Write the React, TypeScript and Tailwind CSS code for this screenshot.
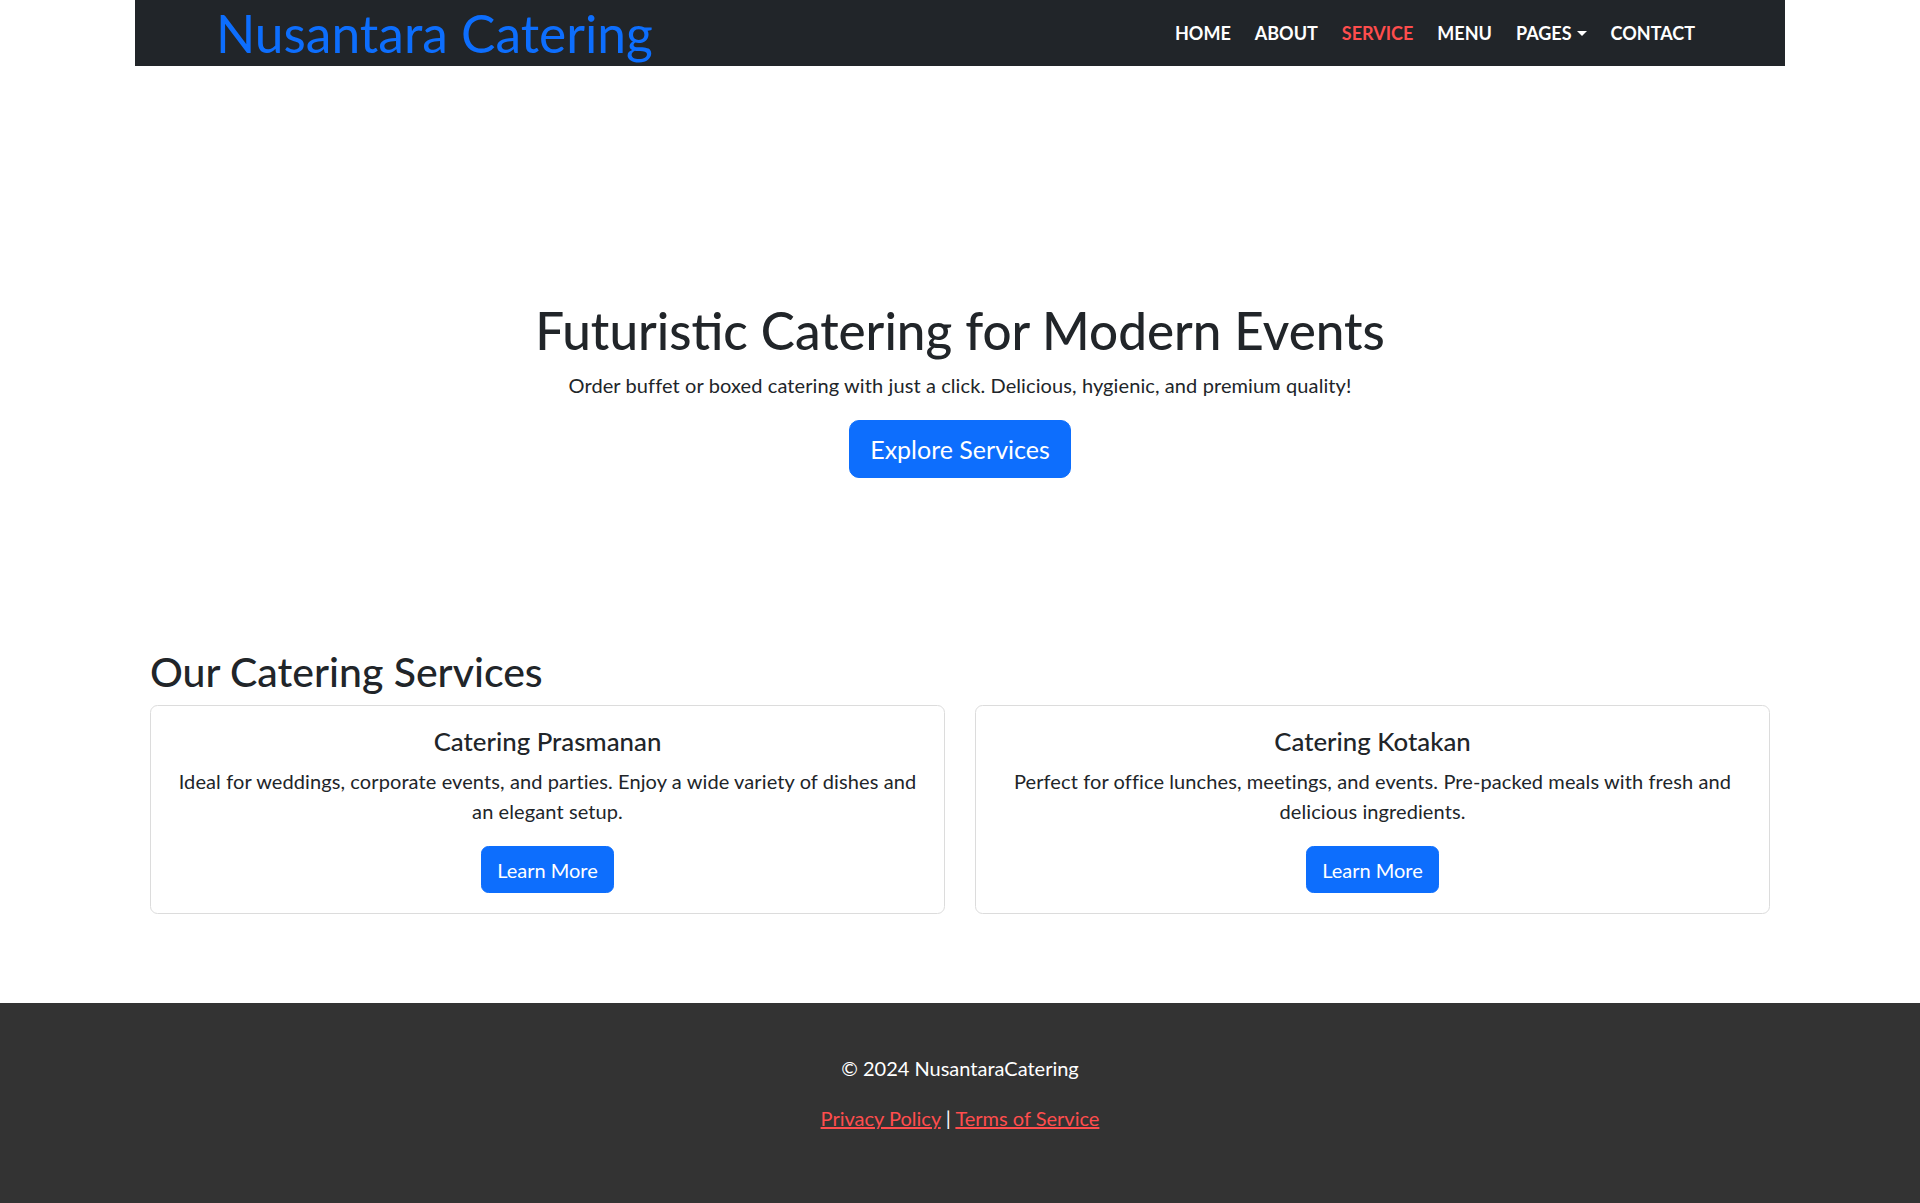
import React from "react";

const font = { fontFamily: "Lato, 'Open Sans', sans-serif" };

function Caret() {
  return (
    <span className="ml-[5px] inline-block align-[4px] border-x-[5px] border-t-[5px] border-x-transparent border-t-white" />
  );
}

function Card({ title, lines }: { title: string; lines: string[] }) {
  return (
    <div className="rounded-[7.5px] border border-[#dcdcdc] bg-white p-5 text-center">
      <h5 className="mb-[10px] text-[25.8px] font-medium leading-[30px] text-[#212529]">{title}</h5>
      <p className="mb-5 text-[20px] leading-[30px] tracking-[0.1px] text-[#212529]">
        {lines[0]}
        <br />
        {lines[1]}
      </p>
      <button className="rounded-[7.5px] border border-[#0d6efd] bg-[#0d6efd] px-[15px] py-[7.5px] text-[20px] leading-[30px] text-white">
        Learn More
      </button>
    </div>
  );
}

export default function App() {
  return (
    <div className="min-h-screen bg-white text-[#212529]" style={font}>
      <nav className="mx-[135px] flex h-[66px] items-center justify-between bg-[#212529] pl-[81px] pr-[90px]">
        <a className="text-[51.5px] leading-[60px] text-[#0d6efd]">Nusantara Catering</a>
        <ul className="flex items-center gap-[24px] text-[18px] font-bold uppercase text-white">
          <li>HOME</li>
          <li>ABOUT</li>
          <li className="text-[#ff4d4d]">SERVICE</li>
          <li>MENU</li>
          <li className="flex items-center">
            PAGES
            <Caret />
          </li>
          <li>CONTACT</li>
        </ul>
      </nav>

      <section className="pt-[234px] pb-[170px] text-center">
        <h1 className="mb-[10px] text-[51.2px] font-medium leading-[60px]">Futuristic Catering for Modern Events</h1>
        <p className="mb-5 text-[20px] leading-[30px] tracking-[0.1px]">
          Order buffet or boxed catering with just a click. Delicious, hygienic, and premium quality!
        </p>
        <button className="rounded-[10px] border border-[#0d6efd] bg-[#0d6efd] px-5 py-[10px] text-[25px] leading-[36px] text-white">
          Explore Services
        </button>
      </section>

      <section className="mx-[135px] px-[15px] pb-[89px]">
        <h2 className="mb-[9px] text-[41px] font-medium leading-[48px]">Our Catering Services</h2>
        <div className="grid grid-cols-2 gap-[30px]">
          <Card
            title="Catering Prasmanan"
            lines={[
              "Ideal for weddings, corporate events, and parties. Enjoy a wide variety of dishes and",
              "an elegant setup.",
            ]}
          />
          <Card
            title="Catering Kotakan"
            lines={[
              "Perfect for office lunches, meetings, and events. Pre-packed meals with fresh and",
              "delicious ingredients.",
            ]}
          />
        </div>
      </section>

      <footer className="bg-[#333333] py-[50px] text-center text-[20px] leading-[30px] text-white">
        <p className="mb-5">© 2024 NusantaraCatering</p>
        <p className="mb-5">
          <a className="text-[#ff4d4d] underline">Privacy Policy</a> |{" "}
          <a className="text-[#ff4d4d] underline">Terms of Service</a>
        </p>
      </footer>
    </div>
  );
}
